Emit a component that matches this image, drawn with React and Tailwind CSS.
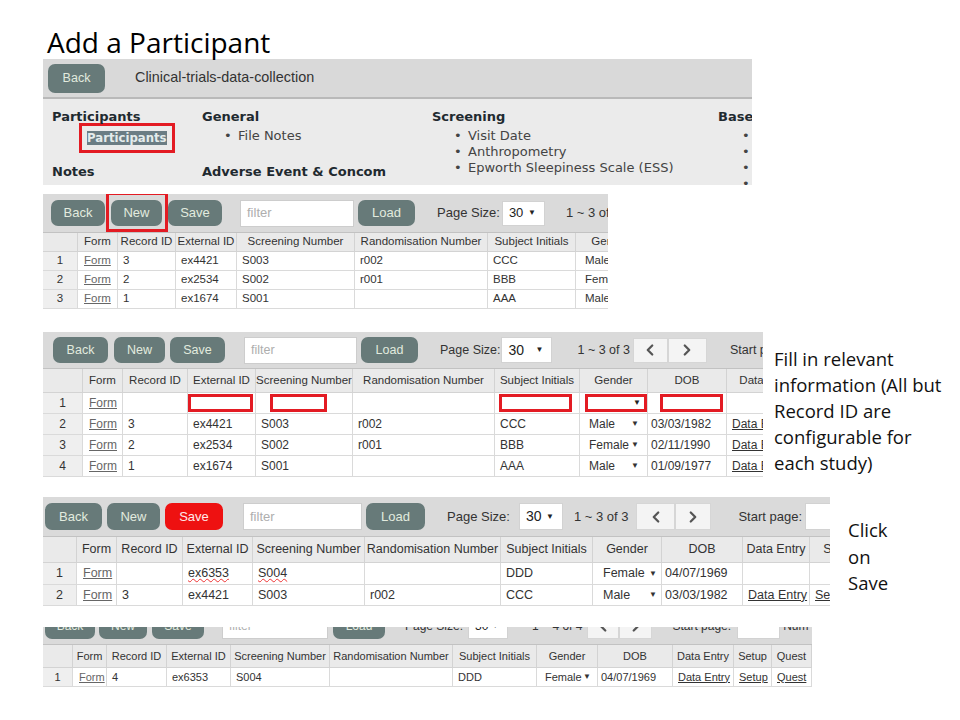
import { ChevronLeft, ChevronRight } from 'lucide-react';

const arial = "font-['Liberation_Sans',Arial,sans-serif]";
const verdana = "font-['DejaVu_Sans',Verdana,sans-serif]";

function Btn({ className = '', red, children }) {
  return (
    <div
      className={`flex shrink-0 items-center justify-center rounded-[7px] ${
        red ? 'bg-[#ee1111] text-[#ffe9e9]' : 'bg-[#677a79] text-[#e2ebdf]'
      } ${className}`}
    >
      {children}
    </div>
  );
}

function Filter({ className = '' }) {
  return (
    <div className={`flex shrink-0 items-center border border-[#cdcdcd] bg-white pl-[6px] text-[#aeaeae] ${className}`}>
      filter
    </div>
  );
}

function PageSel({ className = '' }) {
  return (
    <div className={`flex shrink-0 items-center justify-between border border-[#d2d2d2] bg-white pl-[6px] pr-[8px] text-[#222] ${className}`}>
      <span>30</span>
      <span className="text-[8px]">▼</span>
    </div>
  );
}

function Pager({ className = '', left }) {
  return (
    <div className={`flex shrink-0 items-center justify-center border border-[#d6d6d6] bg-[#f4f4f4] text-[#555] ${className}`}>
      {left ? <ChevronLeft size={18} strokeWidth={3} /> : <ChevronRight size={18} strokeWidth={3} />}
    </div>
  );
}

const Form = () => <span className="px-[6px] text-[#666] underline">Form</span>;
const Lnk = ({ t }) => <span className="px-[5px] text-[#333] underline">{t}</span>;
const Dob = ({ t }) => <span className="pl-[3px]">{t}</span>;
const Wavy = ({ t }) => (
  <span className="px-[5px] underline decoration-[#e33] decoration-wavy decoration-1">{t}</span>
);
const Sel = ({ v, pad = 'pl-[9px] pr-[8px]' }) => (
  <span className={`flex w-full items-center justify-between ${pad}`}>
    <span>{v}</span>
    <span className="text-[8px]">▼</span>
  </span>
);
const RedBox = ({ className = '', arrow }) => (
  <span className={`flex h-[18px] shrink-0 items-center justify-end border-[3px] border-[#e31b23] bg-white pr-[3px] ${className}`}>
    {arrow && <span className="text-[8px] text-[#222]">▼</span>}
  </span>
);

function Grid({ cols, head, rows, headH, rowHs, text, headText = '' }) {
  return (
    <div className={`grid ${cols} ${text} text-[#333]`}>
      {head.map((h, i) => (
        <div
          key={'h' + i}
          className={`${headH} ${headText} flex items-center justify-center overflow-hidden whitespace-nowrap border-r border-b border-[#d3d3d3] bg-[#eaeaea]`}
        >
          {h}
        </div>
      ))}
      {rows.map((r, ri) =>
        r.map((c, ci) => (
          <div
            key={ri + '-' + ci}
            className={`${rowHs[ri]} flex min-w-0 items-center overflow-hidden whitespace-nowrap border-r border-b border-[#dadada] ${
              ci === 0 ? 'justify-center bg-[#efefef]' : 'bg-white'
            }`}
          >
            {typeof c === 'string' ? <span className="px-[5px]">{c}</span> : c}
          </div>
        ))
      )}
    </div>
  );
}

const fullHead = ['', 'Form', 'Record ID', 'External ID', 'Screening Number', 'Randomisation Number', 'Subject Initials', 'Gender', 'DOB', 'Data Entry', 'Setup', 'Quest'];

function Bullet({ children, ml = 'ml-[22px]' }) {
  return (
    <div className="flex whitespace-nowrap">
      <span className={`${ml} w-[14px] shrink-0`}>•</span>
      <span>{children}</span>
    </div>
  );
}

export default function App() {
  return (
    <div className={`h-[720px] w-[960px] overflow-hidden bg-white ${arial}`}>
      <div className="ml-[47px] mt-[25px] h-[34px] font-['Open_Sans',sans-serif] text-[28px] leading-[34px] text-black">
        Add a Participant
      </div>

      {/* header screenshot */}
      <div className="ml-[43px] h-[126px] w-[709px] overflow-hidden">
        <div className="flex h-[40px] items-center border-b-2 border-[#b9b9b9] bg-[#d9d9d9]">
          <Btn className="ml-[5px] h-[29px] w-[57px] text-[12.5px]">Back</Btn>
          <span className="ml-[30px] text-[14.4px] text-[#333]">Clinical-trials-data-collection</span>
        </div>
        <div className={`grid h-[86px] grid-cols-[150px_230px_286px_80px] bg-[#ebebeb] pl-[9px] pt-[10px] text-[13px] leading-[16px] text-[#444] ${verdana}`}>
          <div>
            <div className="font-bold text-[#1f2a30]">Participants</div>
            <div className="ml-[27px] mt-[-2px] h-[30px] w-[96px] border-[3px] border-[#e31b23] pl-[5px] pt-[4px]">
              <span className="bg-[#6b7d84] text-[11.7px] font-bold leading-[14px] text-[#e4ecec]">Participants</span>
            </div>
            <div className="mt-[11px] font-bold text-[#1f2a30]">Notes</div>
          </div>
          <div>
            <div className="font-bold text-[#1f2a30]">General</div>
            <div className="mt-[3px]">
              <Bullet>File Notes</Bullet>
            </div>
            <div className="mt-[20px] whitespace-nowrap font-bold text-[#1f2a30]">Adverse Event &amp; Concom</div>
          </div>
          <div>
            <div className="font-bold text-[#1f2a30]">Screening</div>
            <div className="mt-[3px]">
              <Bullet>Visit Date</Bullet>
              <Bullet>Anthropometry</Bullet>
              <Bullet>Epworth Sleepiness Scale (ESS)</Bullet>
            </div>
          </div>
          <div className="overflow-hidden">
            <div className="font-bold text-[#1f2a30]">Base</div>
            <div className="mt-[3px]">
              <Bullet ml="ml-[24px]">{''}</Bullet>
              <Bullet ml="ml-[24px]">{''}</Bullet>
              <Bullet ml="ml-[24px]">{''}</Bullet>
              <Bullet ml="ml-[24px]">{''}</Bullet>
            </div>
          </div>
        </div>
      </div>

      {/* step 1: click New */}
      <div className="ml-[43px] mt-[9px] h-[115px] w-[565px] overflow-hidden">
        <div className="flex h-[39px] items-center whitespace-nowrap border-b border-[#c2c2c2] bg-[#dadada] text-[13px]">
          <Btn className="ml-[8px] h-[26px] w-[54px]">Back</Btn>
          <div className="relative ml-[6px]">
            <Btn className="h-[26px] w-[51px]">New</Btn>
            <div className="absolute -top-[8px] -bottom-[6px] -left-[5px] -right-[6px] border-[3px] border-[#e31b23]" />
          </div>
          <Btn className="ml-[6px] h-[26px] w-[54px]">Save</Btn>
          <Filter className="ml-[18px] h-[27px] w-[114px]" />
          <Btn className="ml-[4px] h-[26px] w-[57px]">Load</Btn>
          <span className="ml-[22px] text-[#333]">Page Size:</span>
          <PageSel className="ml-[2px] h-[25px] w-[43px]" />
          <span className="ml-[21px] text-[#333]">1 ~ 3 of 3</span>
        </div>
        <Grid
          cols="grid-cols-[35px_40px_58px_61px_118px_133px_88px_70px]"
          text="text-[11.5px]"
          headH="h-[19px]"
          rowHs={['h-[19px]', 'h-[19px]', 'h-[19px]']}
          head={fullHead.slice(0, 8)}
          rows={[
            ['1', <Form />, '3', 'ex4421', 'S003', 'r002', 'CCC', <Sel v="Male" />],
            ['2', <Form />, '2', 'ex2534', 'S002', 'r001', 'BBB', <Sel v="Female" />],
            ['3', <Form />, '1', 'ex1674', 'S001', '', 'AAA', <Sel v="Male" />],
          ]}
        />
      </div>

      {/* step 2: fill in */}
      <div className="mt-[23px] flex">
        <div className="ml-[43px] h-[145px] w-[720px] shrink-0 overflow-hidden">
          <div className="flex h-[37px] items-center whitespace-nowrap border-b border-[#c2c2c2] bg-[#dadada] text-[12.5px]">
            <Btn className="ml-[10px] h-[26px] w-[55px]">Back</Btn>
            <Btn className="ml-[6px] h-[26px] w-[51px]">New</Btn>
            <Btn className="ml-[5px] h-[26px] w-[55px]">Save</Btn>
            <Filter className="ml-[19px] h-[27px] w-[113px]" />
            <Btn className="ml-[4px] h-[26px] w-[57px]">Load</Btn>
            <span className="ml-[22px] text-[#333]">Page Size:</span>
            <PageSel className="ml-[1px] h-[26px] w-[51px] text-[14px]" />
            <span className="ml-[25px] text-[#333]">1 ~ 3 of 3</span>
            <Pager left className="ml-[3px] h-[25px] w-[35px]" />
            <Pager className="h-[25px] w-[39px]" />
            <span className="ml-[23px] text-[#333]">Start page:</span>
          </div>
          <Grid
            cols="grid-cols-[40px_40px_65px_68px_97px_142px_85px_68px_79px_80px]"
            text="text-[12px]"
            headText="text-[11.5px]"
            headH="h-[24px]"
            rowHs={['h-[21px]', 'h-[21px]', 'h-[21px]', 'h-[21px]']}
            head={fullHead.slice(0, 10)}
            rows={[
              ['1', <Form />, '', <RedBox className="w-[65px]" />, <RedBox className="ml-[14px] w-[57px]" />, '', <RedBox className="ml-[4px] w-[73px]" />, <RedBox className="ml-[5px] w-[62px]" arrow />, <RedBox className="ml-[12px] w-[63px]" />, ''],
              ['2', <Form />, '3', 'ex4421', 'S003', 'r002', 'CCC', <Sel v="Male" />, <Dob t="03/03/1982" />, <Lnk t="Data Entry" />],
              ['3', <Form />, '2', 'ex2534', 'S002', 'r001', 'BBB', <Sel v="Female" />, <Dob t="02/11/1990" />, <Lnk t="Data Entry" />],
              ['4', <Form />, '1', 'ex1674', 'S001', '', 'AAA', <Sel v="Male" />, <Dob t="01/09/1977" />, <Lnk t="Data Entry" />],
            ]}
          />
        </div>
        <div className="ml-[11px] mt-[14px] whitespace-nowrap font-['Open_Sans',sans-serif] text-[18.5px] leading-[26px] text-[#111]">
          <div>Fill in relevant</div>
          <div>information (All but</div>
          <div>Record ID are</div>
          <div>configurable for</div>
          <div>each study)</div>
        </div>
      </div>

      {/* step 3: save */}
      <div className="mt-[20px] flex">
        <div className="ml-[43px] h-[109px] w-[787px] shrink-0 overflow-hidden">
          <div className="flex h-[40px] items-center whitespace-nowrap border-b border-[#c2c2c2] bg-[#dadada] text-[13px]">
            <Btn className="ml-[2px] h-[27px] w-[57px]">Back</Btn>
            <Btn className="ml-[5px] h-[27px] w-[53px]">New</Btn>
            <Btn red className="ml-[5px] h-[27px] w-[58px]">Save</Btn>
            <Filter className="ml-[20px] h-[27px] w-[119px]" />
            <Btn className="ml-[4px] h-[27px] w-[59px]">Load</Btn>
            <span className="ml-[22px] text-[#333]">Page Size:</span>
            <PageSel className="ml-[9px] h-[27px] w-[44px] text-[14px]" />
            <span className="ml-[11px] text-[#333]">1 ~ 3 of 3</span>
            <Pager left className="ml-[8px] h-[27px] w-[39px]" />
            <Pager className="h-[27px] w-[36px]" />
            <span className="ml-[27px] text-[#333]">Start page:</span>
            <div className="ml-[3px] h-[27px] w-[40px] shrink-0 border border-[#d2d2d2] bg-white" />
          </div>
          <Grid
            cols="grid-cols-[34px_40px_66px_70px_112px_136px_92px_69px_81px_67px_60px]"
            text="text-[12.5px]"
            headH="h-[26px]"
            rowHs={['h-[22px]', 'h-[21px]']}
            head={fullHead.slice(0, 11)}
            rows={[
              ['1', <Form />, '', <Wavy t="ex6353" />, <Wavy t="S004" />, '', 'DDD', <Sel v="Female" pad="pl-[10px] pr-[4px]" />, <Dob t="04/07/1969" />, '', ''],
              ['2', <Form />, '3', 'ex4421', 'S003', 'r002', 'CCC', <Sel v="Male" pad="pl-[10px] pr-[4px]" />, <Dob t="03/03/1982" />, <Lnk t="Data Entry" />, <Lnk t="Setup" />],
            ]}
          />
        </div>
        <div className="ml-[18px] mt-[20px] font-['Open_Sans',sans-serif] text-[18.5px] leading-[26.5px] text-[#111]">
          <div>Click</div>
          <div>on</div>
          <div>Save</div>
        </div>
      </div>

      {/* result */}
      <div className="ml-[43px] mt-[21px] h-[60px] w-[769px] overflow-hidden">
        <div className="mt-[-20px] flex h-[38px] items-center whitespace-nowrap border-b border-[#c2c2c2] bg-[#dadada] text-[12px]">
          <Btn className="ml-[2px] h-[26px] w-[50px]">Back</Btn>
          <Btn className="ml-[4px] h-[26px] w-[48px]">New</Btn>
          <Btn className="ml-[5px] h-[26px] w-[52px]">Save</Btn>
          <Filter className="ml-[18px] h-[26px] w-[106px]" />
          <Btn className="ml-[5px] h-[26px] w-[52px]">Load</Btn>
          <span className="ml-[20px] text-[#333]">Page Size:</span>
          <PageSel className="ml-[5px] h-[26px] w-[40px]" />
          <span className="ml-[24px] text-[#333]">1 ~ 4 of 4</span>
          <Pager left className="ml-[5px] h-[26px] w-[32px]" />
          <Pager className="h-[26px] w-[33px]" />
          <span className="ml-[20px] text-[#333]">Start page:</span>
          <div className="ml-[6px] h-[26px] w-[43px] shrink-0 border border-[#d2d2d2] bg-white" />
          <span className="ml-[3px] text-[#333]">Num</span>
        </div>
        <Grid
          cols="grid-cols-[30px_34px_60px_64px_99px_123px_84px_61px_75px_61px_38px_40px]"
          text="text-[11px]"
          headH="h-[23px]"
          rowHs={['h-[19px]']}
          head={fullHead}
          rows={[
            ['1', <Form />, '4', 'ex6353', 'S004', '', 'DDD', <Sel v="Female" pad="pl-[8px] pr-[6px]" />, <Dob t="04/07/1969" />, <Lnk t="Data Entry" />, <Lnk t="Setup" />, <Lnk t="Quest" />],
          ]}
        />
      </div>
    </div>
  );
}
